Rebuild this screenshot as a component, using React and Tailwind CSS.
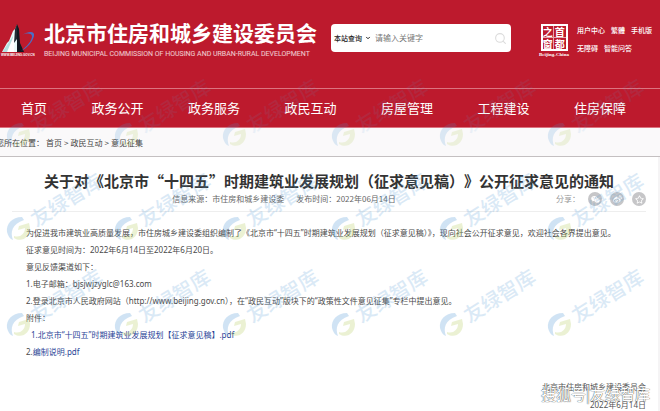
import { FaRegStar, FaWeibo, FaWeixin } from "react-icons/fa";
import { Search, ChevronDown } from "lucide-react";

const NAV_ITEMS = ["首页", "政务公开", "政务服务", "政民互动", "房屋管理", "工程建设", "住房保障"];

const TOP_LINKS = [
  ["用户中心", "繁體", "手机版"],
  ["无障碍", "智能问答"],
];

const CRUMBS = ["首页", "政民互动", "意见征集"];

const SHARES = [
  { label: "微信", Icon: FaWeixin },
  { label: "微博", Icon: FaWeibo },
  { label: "收藏", Icon: FaRegStar },
];

// the first row sits on the red nav bar, so its lettering is fainter
const MARK_COLS = [19, 127, 235, 344, 452, 560];
const MARK_ROWS = [
  { y: 135, logo: 0.18, text: 0.1 },
  { y: 229, logo: 0.26, text: 0.22 },
  { y: 325, logo: 0.26, text: 0.22 },
];

function Emblem() {
  return (
    <svg className="w-[38px] h-9 shrink-0" viewBox="0 0 38 36" aria-hidden="true">
      <path d="M2 28 L7 19 L9 17 L13 7 L15 5 L17 1 L18 28 Z" fill="#e9fbfb" />
      <path d="M3 27 L9 18 L13 12 L12 28 L3 28 Z" fill="#8fd0d0" opacity=".6" />
      <path d="M7 28 L15 9 L14 28 Z" fill="#fff" />
      <path d="M17 0 L19 5 L20 19 L24 28 L17 28 Z" fill="#101820" />
      <path d="M15 5 L17 0 L17 15 L14 19 Z" fill="#222c35" />
      <path d="M22 11 C29 7 35 7 34 12 C32 19 27 24 21 27 C27 22 32 17 32 12 C31 9 27 9 22 11 Z" fill="#4b6fc6" />
      <text x="1" y="32" fontSize="3" fontWeight="700" fill="#fff" fontFamily="Liberation Sans, sans-serif">WWW.BEIJING.GOV.CN</text>
    </svg>
  );
}

function Seal() {
  return (
    <a href="#" className="flex flex-col items-center w-[30px] text-white">
      <span className="grid grid-cols-2 w-[27px] border-2 border-white text-[10px] leading-[11px] font-bold text-center">
        <span className="border-r border-b border-white/60">之</span>
        <span className="border-b border-white/60">首</span>
        <span className="border-r border-white/60">窗</span>
        <span>都</span>
      </span>
      <span className="mt-px font-['Liberation_Serif',serif] font-bold text-[5px] leading-[5px] whitespace-nowrap">Beijing-China</span>
    </a>
  );
}

function Header() {
  return (
    <header className="bg-[#bd1a2d] text-white">
      <div className="flex items-start h-[88px] pt-6">
        <a href="#" className="flex shrink-0">
          <Emblem />
          <span className="ml-[6px] -mt-1.5">
            <span className="block text-[21px] leading-[28px] font-bold whitespace-nowrap">北京市住房和城乡建设委员会</span>
            <span className="block mt-[3px] font-[Roboto,sans-serif] text-[7px] leading-[10px] whitespace-nowrap text-white/80">
              BEIJING MUNICIPAL COMMISSION OF HOUSING AND URBAN-RURAL DEVELOPMENT
            </span>
          </span>
        </a>

        <form className="ml-[14px] w-[180px] h-7 flex items-center rounded bg-white text-[#222]">
          <span className="relative flex items-center shrink-0">
            <select aria-label="查询范围" className="appearance-none bg-transparent text-[7px] font-medium pl-[3px] w-10 outline-none">
              <option>本站查询</option>
            </select>
            <ChevronDown className="absolute right-0 w-[6px] h-[6px] pointer-events-none" strokeWidth={4} />
          </span>
          <input
            type="text"
            aria-label="关键字"
            placeholder="请输入关键字"
            className="ml-1 flex-1 min-w-0 text-[8px] outline-none placeholder:text-[#777]"
          />
          <button type="button" aria-label="搜索" className="mr-1 text-[#dcdcdc]">
            <Search className="w-[13px] h-[13px]" strokeWidth={2} />
          </button>
        </form>

        <div className="ml-auto mr-2 flex gap-2">
          <Seal />
          <div className="flex flex-col gap-2 pt-px">
            {TOP_LINKS.map((row, i) => (
              <div key={i} className="flex gap-[6px] text-[7px] leading-[10px] font-medium whitespace-nowrap">
                {row.map((t) => (
                  <a key={t} href="#">{t}</a>
                ))}
              </div>
            ))}
          </div>
        </div>
      </div>

      <nav className="flex justify-between items-center h-10 pl-[21px] pr-[34px] border-y border-[#dc7480] text-[13px]">
        {NAV_ITEMS.map((t) => (
          <a key={t} href="#">{t}</a>
        ))}
      </nav>
    </header>
  );
}

function Breadcrumb() {
  return (
    <div className="h-[29px] bg-[#faf9fa] border-b border-[#c4c0c1] pt-px flex items-center gap-[2px] text-[8px] text-[#444] whitespace-nowrap">
      <span className="-ml-1">您所在位置：</span>
      {CRUMBS.map((t, i) => (
        <span key={t} className="flex gap-[2px]">
          {i > 0 && <span>&gt;</span>}
          <a href="#">{t}</a>
        </span>
      ))}
    </div>
  );
}

function Watermarks() {
  return (
    <svg className="absolute inset-0 w-full h-full pointer-events-none" aria-hidden="true">
      {MARK_ROWS.map(({ y, logo, text }) =>
        MARK_COLS.map((x) => (
          <g key={`${x}-${y}`} transform={`translate(${x} ${y})`}>
            <g opacity={logo}>
              <path d="M3 -12 C-7 -12 -13 -5 -12 3 C-11 7 -9 10 -6 11 C-9 3 -7 -5 5 -9 Z" fill="#4f97d6" />
              <path d="M-5 9 C3 14 11 8 11 -1 L10 -6 L0 -3 L-1 1 L6 -1 C6 5 1 9 -5 7 Z" fill="#b3cc5a" />
            </g>
            <text
              transform="translate(47 -30) rotate(-32)"
              textAnchor="middle"
              dominantBaseline="central"
              fontSize="20"
              fontWeight="500"
              fill="#5b9fd8"
              opacity={text}
            >
              友绿智库
            </text>
          </g>
        ))
      )}
    </svg>
  );
}

function Article() {
  return (
    <main className="mr-[2px] px-3 pt-[14px] bg-white">
      <h1
        lang="zh-CN"
        className="text-center font-['Noto_Sans_CJK_SC',sans-serif] text-[15px] leading-[20px] font-bold text-[#333] whitespace-nowrap [text-spacing-trim:space-all] [font-variant-east-asian:full-width]"
      >
        关于对《北京市“十四五”时期建筑业发展规划（征求意见稿）》公开征求意见的通知
      </h1>

      <div className="flex items-center h-[21px] pb-1 border-b border-[#eeeeee] text-[8px] text-[#666] whitespace-nowrap">
        <div className="flex-1 flex justify-center gap-3">
          <span>信息来源：市住房和城乡建设委</span>
          <span>发布时间：2022年06月14日</span>
        </div>
        <div className="flex items-center gap-2 text-[#999]">
          <span>分享：</span>
          {SHARES.map(({ label, Icon }) => (
            <button key={label} type="button" aria-label={label} className="w-[14px] h-[14px] rounded-full bg-[#c6c6c8] text-white flex items-center justify-center">
              <Icon className="w-[9px] h-[9px]" />
            </button>
          ))}
        </div>
      </div>

      <div className="pt-3 pl-[14px] font-['Noto_Sans','Noto_Sans_CJK_SC',sans-serif] text-[8px] leading-[17px] text-[#4a4a4a] whitespace-nowrap">
        <p>为促进我市建筑业高质量发展，市住房城乡建设委组织编制了《北京市“十四五”时期建筑业发展规划（征求意见稿）》，现向社会公开征求意见，欢迎社会各界提出意见。</p>
        <p>征求意见时间为：2022年6月14日至2022年6月20日。</p>
        <p>意见反馈渠道如下：</p>
        <p>1.电子邮箱：bjsjwjzyglc@163.com</p>
        <p>2.登录北京市人民政府网站（http://www.beijing.gov.cn），在“政民互动”版块下的“政策性文件意见征集”专栏中提出意见。</p>
        <p>附件：</p>
        <p className="pl-[5px] text-[#2a4597]">
          <a href="#">1.北京市“十四五”时期建筑业发展规划【征求意见稿】.pdf</a>
        </p>
        <p>2.<a href="#" className="text-[#2a4597]">编制说明.pdf</a></p>
      </div>

      <div className="relative mt-[18px] text-right font-['Noto_Sans','Noto_Sans_CJK_SC',sans-serif] text-[8px] leading-[17px] text-[#555]">
        <p>北京市住房和城乡建设委员会</p>
        <span className="absolute -right-1 top-[6px] font-['Noto_Sans_CJK_SC',sans-serif] text-[15px] leading-[20px] text-white whitespace-nowrap [text-shadow:0_0_1px_#444,0_0_1px_#777]">
          搜狐号|友绿智库
        </span>
        <p className="relative pt-px">2022年6月14日</p>
      </div>
    </main>
  );
}

export default function App() {
  return (
    <div className="relative min-h-screen overflow-hidden bg-[#f5f4f5] font-['Noto_Sans_CJK_SC',sans-serif]">
      <Header />
      <Breadcrumb />
      <Article />
      <Watermarks />
    </div>
  );
}
